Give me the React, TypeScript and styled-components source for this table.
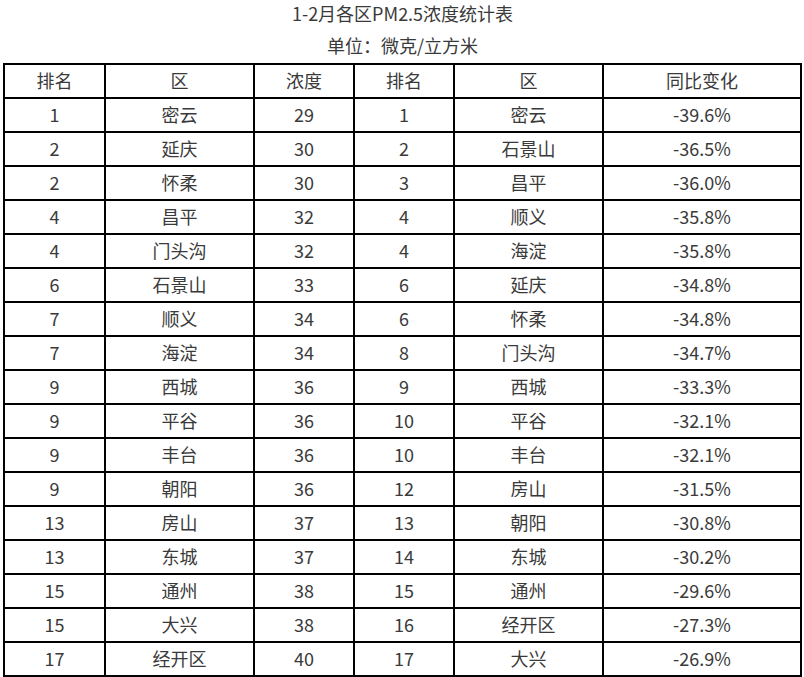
import styled, { createGlobalStyle } from 'styled-components';

const GlobalStyle = createGlobalStyle`
  html, body {
    margin: 0;
    padding: 0;
    background: #fff;
  }
  body {
    font-family: "Noto Sans CJK SC", "Noto Sans", sans-serif;
    color: #3a3a3a;
  }
`;

const Page = styled.div`
  width: 804px;
  padding: 0 2px 0 3px;
  box-sizing: border-box;
`;

const Title = styled.div`
  text-align: center;
  font-size: 18px;
  line-height: 26px;
  padding-bottom: 4px;
`;

const Unit = styled(Title)`
  padding-top: 2px;
`;

const Grid = styled.div`
  margin-top: 1px;
  display: grid;
  grid-template-columns: 99px 147px 98px 98px 147px 196px;
  grid-auto-rows: 32px;
  gap: 2px;
  padding: 2px;
  background: #000;
`;

const Cell = styled.div`
  background: #fff;
  display: flex;
  align-items: center;
  justify-content: center;
  padding-bottom: 2px;
  box-sizing: border-box;
  font-size: 18px;
  line-height: 1;
  white-space: nowrap;
`;

const headers = ['排名', '区', '浓度', '排名', '区', '同比变化'];

type Row = [string, string, string, string, string, string];

const rows: Row[] = [
  ['1', '密云', '29', '1', '密云', '-39.6%'],
  ['2', '延庆', '30', '2', '石景山', '-36.5%'],
  ['2', '怀柔', '30', '3', '昌平', '-36.0%'],
  ['4', '昌平', '32', '4', '顺义', '-35.8%'],
  ['4', '门头沟', '32', '4', '海淀', '-35.8%'],
  ['6', '石景山', '33', '6', '延庆', '-34.8%'],
  ['7', '顺义', '34', '6', '怀柔', '-34.8%'],
  ['7', '海淀', '34', '8', '门头沟', '-34.7%'],
  ['9', '西城', '36', '9', '西城', '-33.3%'],
  ['9', '平谷', '36', '10', '平谷', '-32.1%'],
  ['9', '丰台', '36', '10', '丰台', '-32.1%'],
  ['9', '朝阳', '36', '12', '房山', '-31.5%'],
  ['13', '房山', '37', '13', '朝阳', '-30.8%'],
  ['13', '东城', '37', '14', '东城', '-30.2%'],
  ['15', '通州', '38', '15', '通州', '-29.6%'],
  ['15', '大兴', '38', '16', '经开区', '-27.3%'],
  ['17', '经开区', '40', '17', '大兴', '-26.9%'],
];

export default function App() {
  return (
    <Page>
      <GlobalStyle />
      <Title>1-2月各区PM2.5浓度统计表</Title>
      <Unit>单位：微克/立方米</Unit>
      <Grid>
        {headers.map((h, i) => (
          <Cell key={'h' + i}>{h}</Cell>
        ))}
        {rows.map((row, r) =>
          row.map((v, c) => <Cell key={r + '-' + c}>{v}</Cell>)
        )}
      </Grid>
    </Page>
  );
}
